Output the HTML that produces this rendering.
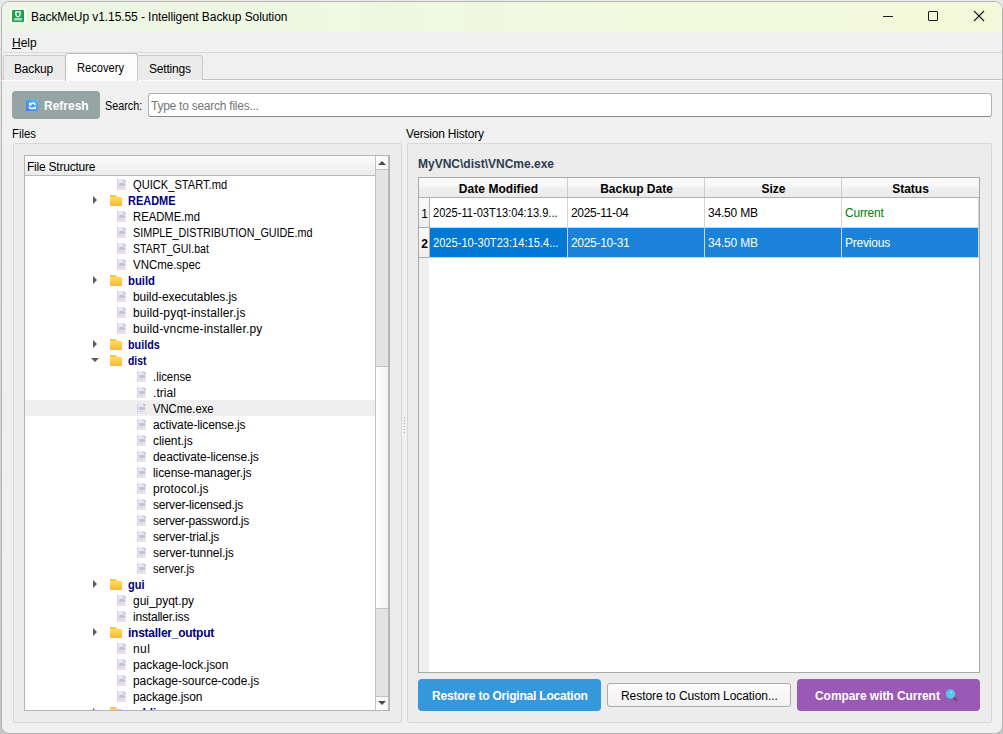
<!DOCTYPE html>
<html><head><meta charset="utf-8">
<style>
*{margin:0;padding:0;box-sizing:border-box}
html,body{width:1003px;height:734px;overflow:hidden}
body{position:relative;background:linear-gradient(#eaeaea,#c6c6c6);font-family:"Liberation Sans",sans-serif;font-size:12px;color:#000}
.a{position:absolute}
.t{position:absolute;white-space:nowrap;line-height:16px;height:16px}
#frame{position:absolute;left:1px;top:1px;width:1002px;height:733px;border:1px solid #b4b4b4;border-radius:8px;background:#f0f0f0;overflow:hidden}
#title{position:absolute;left:2px;top:2px;width:1000px;height:30px;border-radius:7px 7px 0 0;background:linear-gradient(90deg,#edf6e6 0%,#eef8e2 35%,#f1f8dd 60%,#f3f8da 100%)}
.tab{position:absolute;top:55px;height:25px;border:1px solid #cacaca;border-bottom:none;background:#ebebeb;border-radius:3px 3px 0 0}
.tab.sel{top:53px;height:28px;background:#fcfcfc;border-color:#bdbdbd}
.gb{position:absolute;border:1px solid #d8d8d8;background:#ececec;border-radius:2px}
.fi{position:absolute;width:9px;height:11px}
.fo{position:absolute;width:12px;height:11px}
.arr{position:absolute;width:0;height:0;border-top:4px solid transparent;border-bottom:4px solid transparent;border-left:4px solid #595959}
.arrd{position:absolute;width:0;height:0;border-left:4px solid transparent;border-right:4px solid transparent;border-top:4px solid #595959}
.fd{font-weight:bold;color:#000080}
.btn{position:absolute;border-radius:4px;color:#fff;font-weight:bold;text-align:center;line-height:32px;white-space:nowrap}
.hd{position:absolute;top:2px;height:18px;line-height:18px;font-weight:bold;text-align:center;white-space:nowrap}
.cell{position:absolute;height:30px;line-height:30px;white-space:nowrap}
</style></head><body>
<svg width="0" height="0" style="position:absolute;left:0;top:0">
<defs><linearGradient id="fg" x1="0" y1="0" x2="0" y2="1"><stop offset="0" stop-color="#ffdd52"/><stop offset="1" stop-color="#ffb245"/></linearGradient></defs>
<symbol id="sfi" viewBox="0 0 9 11"><path d="M0 0H7L9 2V11H0Z" fill="#e9e3f3"/><rect x="0" y="0" width="1" height="11" fill="#d6d0e2"/><path d="M6.5 0L9 2.5V3H6.5Z" fill="#c2bccd"/><rect x="2" y="4" width="6" height="3" fill="#c9c1d3"/><rect x="2" y="8" width="4" height="1" fill="#d5cde0"/></symbol>
<symbol id="sfo" viewBox="0 0 12 11"><path d="M0 0.5Q0 0 0.5 0H5.5L7.5 2H0Z" fill="#f6c648"/><rect x="0" y="2" width="12" height="9" fill="url(#fg)"/></symbol>
</svg>
<div id="frame"></div>
<div id="title"></div>
<!-- app icon -->
<svg class="a" style="left:10px;top:8px" width="16" height="16" viewBox="0 0 16 16"><rect width="16" height="16" fill="#fbfdf9"/><rect x="2" y="2" width="12" height="12" rx="1" fill="#22a04f"/><path d="M5.9 3.9H10.1V6.6Q10.1 8.3 8 8.9Q5.9 8.3 5.9 6.6Z" stroke="#fff" stroke-width="1.3" fill="none"/><rect x="4" y="10" width="8" height="2.6" fill="#fff" opacity="0.6"/></svg>
<span class="t" style="left:31px;top:9px;letter-spacing:-0.08px">BackMeUp v1.15.55 - Intelligent Backup Solution</span>
<!-- window controls -->
<div class="a" style="left:883px;top:16px;width:10px;height:1px;background:#1a1a1a"></div>
<div class="a" style="left:928px;top:11px;width:10px;height:10px;border:1px solid #1a1a1a;border-radius:1px"></div>
<svg class="a" style="left:973px;top:10px" width="12" height="12" viewBox="0 0 12 12"><path d="M1 1L11 11M11 1L1 11" stroke="#1a1a1a" stroke-width="1.1"/></svg>
<!-- menubar -->
<div class="a" style="left:1px;top:52px;width:1001px;height:1px;background:#dadada"></div>
<span class="t" style="left:12px;top:35px">Help</span>
<div class="a" style="left:12px;top:48px;width:9px;height:1px;background:#000"></div>
<!-- tabs -->
<div class="a" style="left:1px;top:79px;width:1001px;height:1px;background:#c4c4c4"></div><div class="a" style="left:1px;top:80px;width:1001px;height:1px;background:#fcfcfc"></div>
<div class="tab" style="left:3px;width:63px"></div>
<div class="tab sel" style="left:65px;width:73px"></div>
<div class="tab" style="left:137px;width:66px"></div>
<span class="t" style="left:14px;top:61px;z-index:3;letter-spacing:-0.18px">Backup</span>
<span class="t" style="left:77px;top:60px;z-index:3;transform:scaleX(0.929);transform-origin:0 0">Recovery</span>
<span class="t" style="left:149px;top:61px;z-index:3;letter-spacing:-0.2px">Settings</span>
<!-- toolbar -->
<div class="btn" style="left:12px;top:91px;width:88px;height:28px;background:#95a5a6"></div>
<svg class="a" style="left:26px;top:100px" width="12" height="11" viewBox="0 0 12 11"><defs><linearGradient id="rg" x1="1" y1="0" x2="0" y2="1"><stop offset="0" stop-color="#5cb9ff"/><stop offset="1" stop-color="#3a7fea"/></linearGradient></defs><rect width="12" height="11" rx="0.8" fill="url(#rg)"/><path d="M4.2 4.6Q5.2 2.9 7 3Q8.6 3.2 9.3 4.8" stroke="#fff" stroke-width="1.5" fill="none"/><path d="M3 2.2V5.6H6.2Z" fill="#fff"/><path d="M2.8 6.6Q3.6 8.6 6 8.6Q7.4 8.5 8 7.8" stroke="#fff" stroke-width="1.5" fill="none"/><path d="M9.8 5.8V9H6.8Z" fill="#fff"/></svg>
<span class="t" style="left:44px;top:98px;color:#fff;font-weight:bold">Refresh</span>
<span class="t" style="left:105px;top:98px;transform:scaleX(0.9);transform-origin:0 0">Search:</span>
<div class="a" style="left:148px;top:93px;width:844px;height:24px;background:#fff;border:1px solid #b0b0b0;border-bottom-color:#8a8a8a;border-radius:3px"></div>
<span class="t" style="left:151px;top:98px;color:#767676;letter-spacing:-0.25px">Type to search files...</span>
<!-- left group -->
<span class="t" style="left:12px;top:126px;transform:scaleX(0.946);transform-origin:0 0">Files</span>
<div class="gb" style="left:13px;top:143px;width:389px;height:580px"></div>
<div class="a" style="left:24px;top:155px;width:366px;height:556px;border:1px solid #b4b4b4;background:#fff;overflow:hidden">
  <div class="a" style="left:0;top:0;width:350px;height:20px;background:linear-gradient(#fcfcfc,#ececec);border-bottom:1px solid #b8b8b8"></div>
  <span class="t" style="left:2px;top:3px;letter-spacing:-0.22px">File Structure</span>
  <div class="a" style="left:0;top:244px;width:350px;height:16px;background:#efefef"></div>
  <div class="a" style="left:0;top:20px;width:350px;height:534px;overflow:hidden">
   <div class="a" style="left:0;top:-20px;width:350px;height:600px">
<svg class="fi" style="left:92px;top:23px"><use href="#sfi"/></svg><span class="t" style="left:108px;top:21px;transform:scaleX(0.927);transform-origin:0 0">QUICK_START.md</span>
<i class="arr" style="left:68px;top:40px"></i>
<svg class="fo" style="left:85px;top:39px"><use href="#sfo"/></svg><span class="t fd" style="left:103px;top:37px;transform:scaleX(0.915);transform-origin:0 0">README</span>
<svg class="fi" style="left:92px;top:55px"><use href="#sfi"/></svg><span class="t" style="left:108px;top:53px;transform:scaleX(0.938);transform-origin:0 0">README.md</span>
<svg class="fi" style="left:92px;top:71px"><use href="#sfi"/></svg><span class="t" style="left:108px;top:69px;transform:scaleX(0.897);transform-origin:0 0">SIMPLE_DISTRIBUTION_GUIDE.md</span>
<svg class="fi" style="left:92px;top:87px"><use href="#sfi"/></svg><span class="t" style="left:108px;top:85px;transform:scaleX(0.880);transform-origin:0 0">START_GUI.bat</span>
<svg class="fi" style="left:92px;top:103px"><use href="#sfi"/></svg><span class="t" style="left:108px;top:101px;transform:scaleX(0.956);transform-origin:0 0">VNCme.spec</span>
<i class="arr" style="left:68px;top:120px"></i>
<svg class="fo" style="left:85px;top:119px"><use href="#sfo"/></svg><span class="t fd" style="left:103px;top:117px;transform:scaleX(0.943);transform-origin:0 0">build</span>
<svg class="fi" style="left:92px;top:135px"><use href="#sfi"/></svg><span class="t" style="left:108px;top:133px;letter-spacing:-0.07px">build-executables.js</span>
<svg class="fi" style="left:92px;top:151px"><use href="#sfi"/></svg><span class="t" style="left:108px;top:149px;letter-spacing:0.17px">build-pyqt-installer.js</span>
<svg class="fi" style="left:92px;top:167px"><use href="#sfi"/></svg><span class="t" style="left:108px;top:165px;letter-spacing:0.17px">build-vncme-installer.py</span>
<i class="arr" style="left:68px;top:184px"></i>
<svg class="fo" style="left:85px;top:183px"><use href="#sfo"/></svg><span class="t fd" style="left:103px;top:181px;transform:scaleX(0.897);transform-origin:0 0">builds</span>
<i class="arrd" style="left:66px;top:202px"></i>
<svg class="fo" style="left:85px;top:199px"><use href="#sfo"/></svg><span class="t fd" style="left:103px;top:197px;transform:scaleX(0.864);transform-origin:0 0">dist</span>
<svg class="fi" style="left:112px;top:215px"><use href="#sfi"/></svg><span class="t" style="left:128px;top:213px;transform:scaleX(0.944);transform-origin:0 0">.license</span>
<svg class="fi" style="left:112px;top:231px"><use href="#sfi"/></svg><span class="t" style="left:128px;top:229px;letter-spacing:0.06px">.trial</span>
<svg class="fi" style="left:112px;top:247px"><use href="#sfi"/></svg><span class="t" style="left:128px;top:245px;transform:scaleX(0.937);transform-origin:0 0">VNCme.exe</span>
<svg class="fi" style="left:112px;top:263px"><use href="#sfi"/></svg><span class="t" style="left:128px;top:261px;letter-spacing:-0.12px">activate-license.js</span>
<svg class="fi" style="left:112px;top:279px"><use href="#sfi"/></svg><span class="t" style="left:128px;top:277px;letter-spacing:-0.04px">client.js</span>
<svg class="fi" style="left:112px;top:295px"><use href="#sfi"/></svg><span class="t" style="left:128px;top:293px;letter-spacing:-0.11px">deactivate-license.js</span>
<svg class="fi" style="left:112px;top:311px"><use href="#sfi"/></svg><span class="t" style="left:128px;top:309px;letter-spacing:-0.09px">license-manager.js</span>
<svg class="fi" style="left:112px;top:327px"><use href="#sfi"/></svg><span class="t" style="left:128px;top:325px;letter-spacing:0.09px">protocol.js</span>
<svg class="fi" style="left:112px;top:343px"><use href="#sfi"/></svg><span class="t" style="left:128px;top:341px;letter-spacing:-0.19px">server-licensed.js</span>
<svg class="fi" style="left:112px;top:359px"><use href="#sfi"/></svg><span class="t" style="left:128px;top:357px;letter-spacing:-0.26px">server-password.js</span>
<svg class="fi" style="left:112px;top:375px"><use href="#sfi"/></svg><span class="t" style="left:128px;top:373px;letter-spacing:-0.17px">server-trial.js</span>
<svg class="fi" style="left:112px;top:391px"><use href="#sfi"/></svg><span class="t" style="left:128px;top:389px;letter-spacing:-0.08px">server-tunnel.js</span>
<svg class="fi" style="left:112px;top:407px"><use href="#sfi"/></svg><span class="t" style="left:128px;top:405px;transform:scaleX(0.927);transform-origin:0 0">server.js</span>
<i class="arr" style="left:68px;top:424px"></i>
<svg class="fo" style="left:85px;top:423px"><use href="#sfo"/></svg><span class="t fd" style="left:103px;top:421px;transform:scaleX(0.917);transform-origin:0 0">gui</span>
<svg class="fi" style="left:92px;top:439px"><use href="#sfi"/></svg><span class="t" style="left:108px;top:437px;letter-spacing:-0.03px">gui_pyqt.py</span>
<svg class="fi" style="left:92px;top:455px"><use href="#sfi"/></svg><span class="t" style="left:108px;top:453px;letter-spacing:-0.19px">installer.iss</span>
<i class="arr" style="left:68px;top:472px"></i>
<svg class="fo" style="left:85px;top:471px"><use href="#sfo"/></svg><span class="t fd" style="left:103px;top:469px;letter-spacing:-0.25px">installer_output</span>
<svg class="fi" style="left:92px;top:487px"><use href="#sfi"/></svg><span class="t" style="left:108px;top:485px;letter-spacing:0.45px">nul</span>
<svg class="fi" style="left:92px;top:503px"><use href="#sfi"/></svg><span class="t" style="left:108px;top:501px;letter-spacing:-0.04px">package-lock.json</span>
<svg class="fi" style="left:92px;top:519px"><use href="#sfi"/></svg><span class="t" style="left:108px;top:517px;letter-spacing:-0.06px">package-source-code.js</span>
<svg class="fi" style="left:92px;top:535px"><use href="#sfi"/></svg><span class="t" style="left:108px;top:533px;letter-spacing:-0.12px">package.json</span>
<i class="arr" style="left:68px;top:552px"></i>
<svg class="fo" style="left:85px;top:551px"><use href="#sfo"/></svg><span class="t fd" style="left:103px;top:549px;letter-spacing:-0.08px">public</span>
   </div>
  </div>
  <!-- scrollbar -->
  <div class="a" style="left:350px;top:0;width:14px;height:554px;background:#e3e3e3;border-left:1px solid #c2c2c2;border-right:1px solid #bababa"></div>
  <div class="a" style="left:351px;top:0;width:12px;height:13px;background:linear-gradient(90deg,#fdfdfd,#f6f6f6)"></div>
  <div class="a" style="left:351px;top:13px;width:12px;height:1px;background:#c2c2c2"></div>
  <div class="a" style="left:353px;top:5px;width:0;height:0;border-left:4px solid transparent;border-right:4px solid transparent;border-bottom:4px solid #4a4a4a"></div>
  <div class="a" style="left:351px;top:210px;width:12px;height:243px;background:linear-gradient(90deg,#fefefe,#f2f2f2);border-top:1px solid #c2c2c2;border-bottom:1px solid #c2c2c2"></div>
  <div class="a" style="left:351px;top:540px;width:12px;height:1px;background:#c2c2c2"></div>
  <div class="a" style="left:351px;top:541px;width:12px;height:13px;background:linear-gradient(90deg,#fdfdfd,#f6f6f6)"></div>
  <div class="a" style="left:353px;top:545px;width:0;height:0;border-left:4px solid transparent;border-right:4px solid transparent;border-top:4px solid #4a4a4a"></div>
</div>
<!-- splitter dots -->
<div class="a" style="left:404px;top:417px;width:1px;height:17px;background:repeating-linear-gradient(#a8a8a8 0 1px,transparent 1px 3px)"></div>
<!-- right group -->
<span class="t" style="left:406px;top:126px;letter-spacing:-0.19px">Version History</span>
<div class="gb" style="left:407px;top:143px;width:585px;height:580px"></div>
<span class="t" style="left:418px;top:156px;font-weight:bold;color:#2c3e50">MyVNC\dist\VNCme.exe</span>
<div class="a" style="left:418px;top:177px;width:562px;height:496px;border:1px solid #a9a9a9;background:#fff;overflow:hidden">
  <div class="a" style="left:0;top:0;width:560px;height:20px;background:linear-gradient(#fbfbfb 0,#f6f6f6 45%,#eeeeee 55%,#ececec 100%);border-bottom:1px solid #b0b0b0"></div>
  <div class="a" style="left:148px;top:0;width:1px;height:19px;background:#cfcfcf"></div>
  <div class="a" style="left:285px;top:0;width:1px;height:19px;background:#cfcfcf"></div>
  <div class="a" style="left:422px;top:0;width:1px;height:19px;background:#cfcfcf"></div>
  <span class="hd" style="left:10px;width:139px;letter-spacing:0.05px">Date Modified</span>
  <span class="hd" style="left:149px;width:137px">Backup Date</span>
  <span class="hd" style="left:286px;width:137px">Size</span>
  <span class="hd" style="left:423px;width:137px">Status</span>
  <div class="a" style="left:0;top:20px;width:10px;height:474px;background:#efefef"></div><div class="a" style="left:10px;top:20px;width:1px;height:60px;background:#b0b0b0"></div>
  <div class="a" style="left:0;top:20px;width:10px;height:29px;background:linear-gradient(#fafafa,#ededed)"></div>
  <div class="a" style="left:0;top:50px;width:10px;height:29px;background:linear-gradient(#fafafa,#ededed)"></div>
  <div class="a" style="left:0;top:49px;width:10px;height:1px;background:#b0b0b0"></div>
  <div class="a" style="left:0;top:79px;width:10px;height:1px;background:#b0b0b0"></div>
  <span class="a" style="left:0;top:21px;width:10px;height:30px;line-height:30px;text-align:center;padding-left:1px">1</span>
  <span class="a" style="left:0;top:51px;width:10px;height:30px;line-height:30px;text-align:center;font-weight:bold;padding-left:1px">2</span>
  <div class="a" style="left:11px;top:50px;width:549px;height:29px;background:#1a83d9"></div>
  <div class="a" style="left:11px;top:50px;width:137px;height:29px;background:#0078d4"></div>
  <div class="a" style="left:148px;top:20px;width:1px;height:60px;background:#d4d4d4"></div>
  <div class="a" style="left:285px;top:20px;width:1px;height:60px;background:#d4d4d4"></div>
  <div class="a" style="left:422px;top:20px;width:1px;height:60px;background:#d4d4d4"></div>
  <div class="a" style="left:559px;top:20px;width:1px;height:60px;background:#d4d4d4"></div>
  <div class="a" style="left:11px;top:49px;width:549px;height:1px;background:#d4d4d4"></div>
  <div class="a" style="left:11px;top:79px;width:549px;height:1px;background:#d4d4d4"></div>
  <span class="cell" style="left:14px;top:20px;transform:scaleX(0.926);transform-origin:0 0">2025-11-03T13:04:13.9...</span>
  <span class="cell" style="left:152px;top:20px;letter-spacing:-0.3px">2025-11-04</span>
  <span class="cell" style="left:289px;top:20px;letter-spacing:-0.2px">34.50 MB</span>
  <span class="cell" style="left:426px;top:20px;color:#008000;letter-spacing:-0.2px">Current</span>
  <span class="cell" style="left:14px;top:50px;color:#fff;transform:scaleX(0.926);transform-origin:0 0">2025-10-30T23:14:15.4...</span>
  <span class="cell" style="left:152px;top:50px;color:#fff;letter-spacing:-0.3px">2025-10-31</span>
  <span class="cell" style="left:289px;top:50px;color:#fff;letter-spacing:-0.2px">34.50 MB</span>
  <span class="cell" style="left:426px;top:50px;color:#fff;letter-spacing:-0.2px">Previous</span>
</div>
<!-- buttons -->
<div class="btn" style="left:418px;top:679px;width:183px;height:32px;background:#3498db"></div>
<span class="t" style="left:432px;top:688px;color:#fff;font-weight:bold;letter-spacing:-0.2px">Restore to Original Location</span>
<div class="a" style="left:607px;top:683px;width:184px;height:24px;background:linear-gradient(#fdfdfd,#f1f1f1);border:1px solid #acacac;border-radius:3px"></div>
<span class="t" style="left:621px;top:688px;letter-spacing:-0.07px">Restore to Custom Location...</span>
<div class="btn" style="left:797px;top:679px;width:183px;height:32px;background:#9b59b6"></div>
<span class="t" style="left:815px;top:688px;color:#fff;font-weight:bold;letter-spacing:-0.06px">Compare with Current</span>
<svg class="a" style="left:944px;top:688px" width="14" height="14" viewBox="0 0 14 14"><path d="M9.5 9.5L12.3 12.3" stroke="#6a4b7c" stroke-width="2.4" stroke-linecap="round"/><circle cx="6.5" cy="6" r="4.7" fill="#56c5ea"/><circle cx="7.2" cy="4.6" r="1" fill="#a8e6f8"/></svg>
</body></html>
